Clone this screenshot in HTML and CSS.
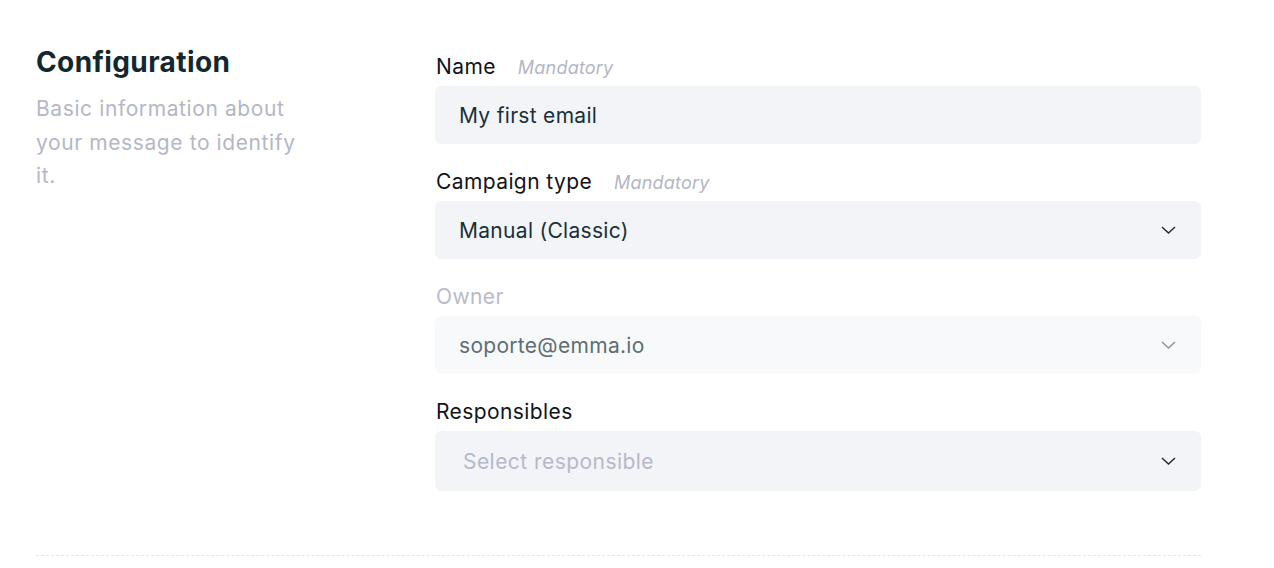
FILE: index.html
```html
<!DOCTYPE html>
<html lang="en">
<head>
<meta charset="utf-8">
<title>Configuration</title>
<link rel="stylesheet" href="styles.css">
</head>
<body>
<section class="section">
  <div class="intro">
    <h2 class="intro-title">Configuration</h2>
    <p class="intro-text">Basic information about your message to identify it.</p>
  </div>
  <div class="fields">
    <div class="field">
      <div class="label-row"><span class="label">Name</span><span class="hint">Mandatory</span></div>
      <div class="control"><span class="value">My first email</span></div>
    </div>
    <div class="field">
      <div class="label-row"><span class="label">Campaign type</span><span class="hint">Mandatory</span></div>
      <div class="control select"><span class="value">Manual (Classic)</span>
        <svg class="chevron" width="15" height="8" viewBox="0 0 15 8"><path d="M1 1l6.5 6 6.5-6" fill="none" stroke="currentColor" stroke-width="1.5"/></svg>
      </div>
    </div>
    <div class="field disabled">
      <div class="label-row"><span class="label">Owner</span></div>
      <div class="control select"><span class="value">soporte@emma.io</span>
        <svg class="chevron" width="15" height="8" viewBox="0 0 15 8"><path d="M1 1l6.5 6 6.5-6" fill="none" stroke="currentColor" stroke-width="1.5"/></svg>
      </div>
    </div>
    <div class="field">
      <div class="label-row"><span class="label">Responsibles</span></div>
      <div class="control select multi"><span class="placeholder">Select responsible</span>
        <svg class="chevron" width="15" height="8" viewBox="0 0 15 8"><path d="M1 1l6.5 6 6.5-6" fill="none" stroke="currentColor" stroke-width="1.5"/></svg>
      </div>
    </div>
  </div>
</section>
<div class="divider"></div>
</body>
</html>
```
FILE: styles.css
```css
html, body {
  margin: 0;
  padding: 0;
  background: #ffffff;
  font-family: Inter, "Noto Sans", sans-serif;
}

.section {
  display: grid;
  grid-template-columns: 399px 766px;
  padding: 44px 0 0 36px;
}

.intro-title {
  margin: 0;
  font-size: 28px;
  font-weight: 700;
  color: #12282f;
  line-height: 36px;
  letter-spacing: 0.4px;
}

.intro-text {
  margin: 12px 0 0;
  width: 262px;
  font-size: 21px;
  line-height: 33.5px;
  letter-spacing: 0.6px;
  color: #b4b7c6;
}

.fields {
  display: flex;
  flex-direction: column;
  gap: 23px;
  padding-top: 8px;
}

.field {
  display: flex;
  flex-direction: column;
  gap: 4px;
}

.label-row {
  display: flex;
  align-items: baseline;
  gap: 22px;
  padding-left: 1px;
  height: 30px;
  line-height: 30px;
}

.label {
  font-size: 21px;
  letter-spacing: 0.4px;
  color: #111418;
}

.hint {
  font-size: 18px;
  font-style: italic;
  letter-spacing: 0.2px;
  color: #b3b6c6;
}

.control {
  height: 58px;
  box-sizing: border-box;
  background: #f3f4f8;
  border-radius: 6px;
  display: flex;
  align-items: center;
  justify-content: space-between;
  padding: 0 25px 0 24px;
}

.control.multi {
  height: 60px;
  padding-left: 28px;
}

.value {
  font-size: 21px;
  letter-spacing: 0.3px;
  color: #17303a;
}

.placeholder {
  font-size: 21px;
  letter-spacing: 0.45px;
  color: #b6b9c8;
}

.chevron {
  color: #1f3138;
}

.disabled .label {
  color: #b8bbc9;
}

.disabled .control {
  background: #f8f9fa;
}

.disabled .value {
  color: #5d6e74;
}

.disabled .chevron {
  color: #8a999e;
}

.divider {
  margin: 64px 0 0 36px;
  width: 1165px;
  border-top: 1px dashed #e4e6ea;
}
```
